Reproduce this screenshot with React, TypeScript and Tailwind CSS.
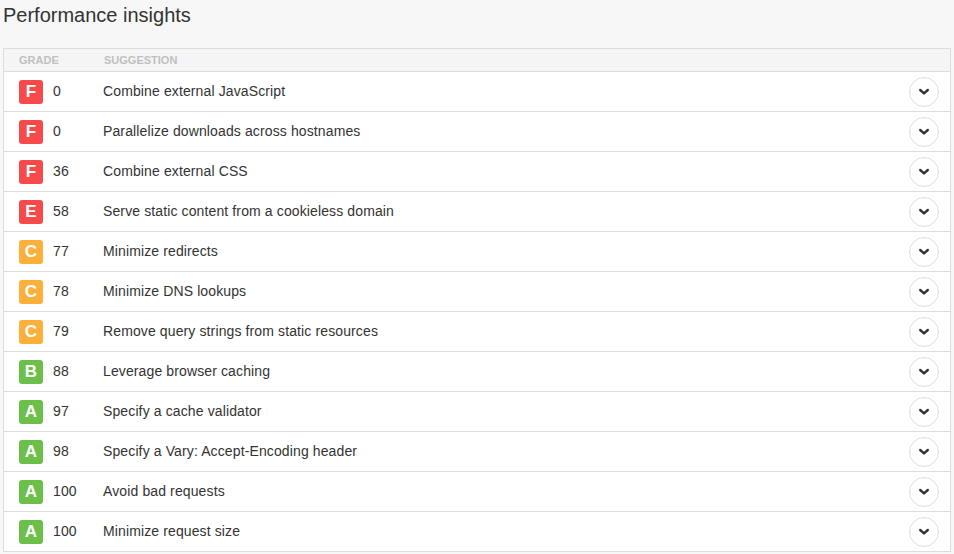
import React from "react";

type Row = { g: string; n: number; s: string };

const rows: Row[] = [
  { g: "F", n: 0, s: "Combine external JavaScript" },
  { g: "F", n: 0, s: "Parallelize downloads across hostnames" },
  { g: "F", n: 36, s: "Combine external CSS" },
  { g: "E", n: 58, s: "Serve static content from a cookieless domain" },
  { g: "C", n: 77, s: "Minimize redirects" },
  { g: "C", n: 78, s: "Minimize DNS lookups" },
  { g: "C", n: 79, s: "Remove query strings from static resources" },
  { g: "B", n: 88, s: "Leverage browser caching" },
  { g: "A", n: 97, s: "Specify a cache validator" },
  { g: "A", n: 98, s: "Specify a Vary: Accept-Encoding header" },
  { g: "A", n: 100, s: "Avoid bad requests" },
  { g: "A", n: 100, s: "Minimize request size" },
];

function badgeClass(g: string) {
  if (g === "F" || g === "E") return "bg-[#f74a4a]";
  if (g === "C") return "bg-[#fbb03b]";
  return "bg-[#6cc04a]";
}

function Chevron() {
  return (
    <svg width="12" height="8" viewBox="0 0 12 8" className="block">
      <polyline
        points="2.2,2 6,5.4 9.8,2"
        fill="none"
        stroke="#333"
        strokeWidth="2.4"
        strokeLinecap="round"
        strokeLinejoin="round"
      />
    </svg>
  );
}

export default function App() {
  return (
    <div
      className="min-h-[554px] w-full bg-[#f7f7f7] px-[3px] text-[#333]"
      style={{ fontFamily: '"Liberation Sans", Arial, sans-serif' }}
    >
      <div className="h-[48px] pt-[1px]">
        <h1 className="text-[20px] leading-[28px] font-normal text-[#333]">Performance insights</h1>
      </div>
      <div className="border-x border-t border-[#dddddd] bg-white">
        <div className="flex h-[23px] items-center border-b border-[#dddddd] bg-[#f5f5f5] text-[11px] font-bold uppercase leading-[22px] text-[#c0c0c0]">
          <div className="w-[100px] pl-[15px]">Grade</div>
          <div>Suggestion</div>
        </div>
        {rows.map((r, i) => (
          <div
            key={i}
            className="flex h-[40px] items-center border-b border-[#dddddd] text-[14px] tracking-[0.12px]"
          >
            <div className="flex w-[99px] items-center pl-[15px]">
              <div
                className={`flex h-[24px] w-[24px] items-center justify-center rounded-[3px] text-[17px] font-bold tracking-normal text-white ${badgeClass(r.g)}`}
              >
                {r.g}
              </div>
              <div className="ml-[10px]">{r.n}</div>
            </div>
            <div className="flex-1">{r.s}</div>
            <div className="pr-[11px]">
              <div className="flex h-[30px] w-[30px] items-center justify-center rounded-full border border-[#dddddd] bg-white">
                <Chevron />
              </div>
            </div>
          </div>
        ))}
      </div>
    </div>
  );
}
